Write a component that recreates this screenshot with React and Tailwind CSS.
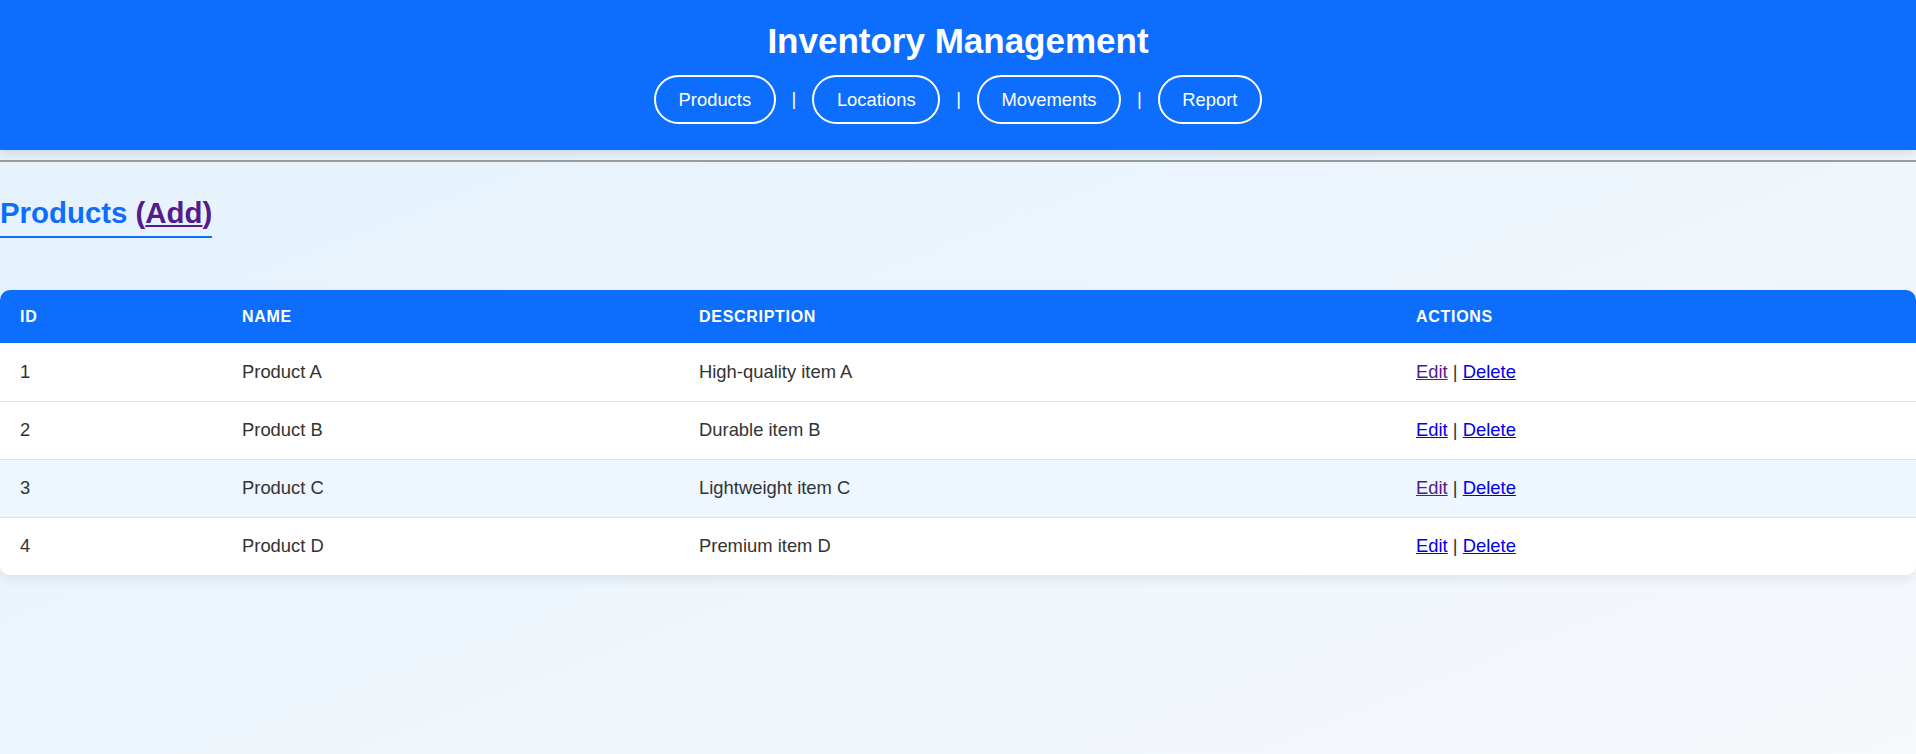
const products = [
  { id: 1, name: "Product A", description: "High-quality item A", visited: true },
  { id: 2, name: "Product B", description: "Durable item B", visited: false },
  { id: 3, name: "Product C", description: "Lightweight item C", visited: true },
  { id: 4, name: "Product D", description: "Premium item D", visited: false },
];

const navLinks = ["Products", "Locations", "Movements", "Report"];

export default function App() {
  return (
    <main className="min-h-screen bg-linear-to-br from-[#e3f2fd] to-[#f6f8fb] font-['Liberation_Sans',Arial,sans-serif] text-[#333]">

      <header className="bg-[#0d6efd] text-white pt-[21px] pb-[26px] shadow-[0_4px_10px_rgba(0,0,0,0.1)]">
        <h1 className="text-center text-[35px] font-bold leading-[40px]">
          Inventory Management
        </h1>

        <nav className="mt-[14px] flex items-center justify-center gap-[16px] text-[18.4px]">
          {navLinks.map((link, i) => (
            <div key={link} className="flex items-center gap-[16px]">
              {i > 0 && <span className="leading-none">|</span>}
              <a
                href="#"
                className="border-2 border-white rounded-full px-[22.5px] py-[12px] leading-[21px] text-white"
              >
                {link}
              </a>
            </div>
          ))}
        </nav>
      </header>

      <hr className="mt-[10px] border-t-2 border-[#9a9a9a]" />

      <section className="mt-[34px]">
        <h2 className="inline-block text-[29.4px] font-bold leading-[34px] text-[#0d6efd] border-b-2 border-[#0d6efd] pb-[6px]">
          Products{" "}
          <a href="#" className="text-[#551a8b] no-underline">
            (<span className="underline">Add</span>)
          </a>
        </h2>

        <div className="mt-[52px] bg-white rounded-[10px] overflow-hidden shadow-[0_4px_12px_rgba(0,0,0,0.08)]">
          <table className="w-full border-collapse text-left">
            <thead className="bg-[#0d6efd] text-white">
              <tr className="h-[53px]">
                <th className="w-[222px] pl-[20px] text-[16px] font-bold uppercase tracking-[0.7px]">ID</th>
                <th className="w-[457px] pl-[20px] text-[16px] font-bold uppercase tracking-[0.7px]">Name</th>
                <th className="w-[717px] pl-[20px] text-[16px] font-bold uppercase tracking-[0.7px]">Description</th>
                <th className="pl-[20px] text-[16px] font-bold uppercase tracking-[0.7px]">Actions</th>
              </tr>
            </thead>
            <tbody className="text-[18.4px]">
              {products.map((p, i) => (
                <tr
                  key={p.id}
                  className={
                    (p.id === 3 ? "bg-[#eef6ff] " : "bg-white ") +
                    (i < products.length - 1 ? "border-b border-[#e2e2e2]" : "")
                  }
                >
                  <td className="h-[58px] pl-[20px]">{p.id}</td>
                  <td className="pl-[20px]">{p.name}</td>
                  <td className="pl-[20px]">{p.description}</td>
                  <td className="pl-[20px]">
                    <a
                      href="#"
                      className={p.visited ? "text-[#551a8b] underline" : "text-[#0000ee] underline"}
                    >
                      Edit
                    </a>{" "}
                    |{" "}
                    <a href="#" className="text-[#0000ee] underline">
                      Delete
                    </a>
                  </td>
                </tr>
              ))}
            </tbody>
          </table>
        </div>
      </section>

    </main>
  );
}
